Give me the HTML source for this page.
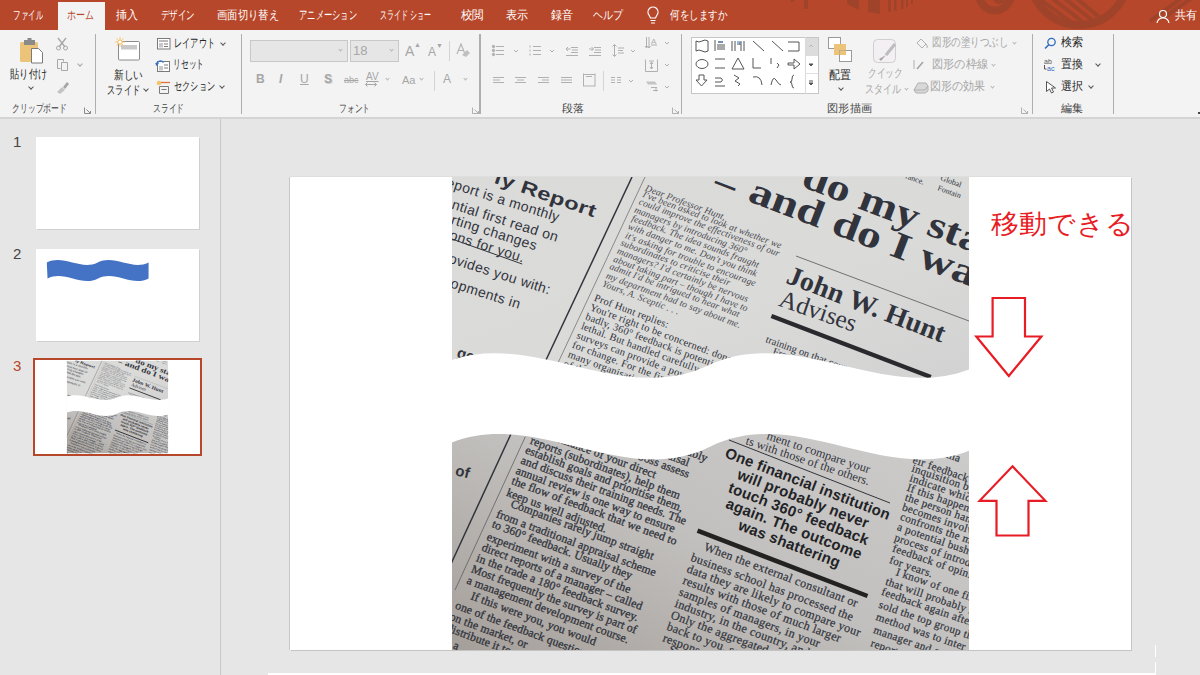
<!DOCTYPE html>
<html><head><meta charset="utf-8">
<style>
*{margin:0;padding:0;box-sizing:border-box}
html,body{width:1200px;height:675px;overflow:hidden;background:#E6E6E6;font-family:"Liberation Sans",sans-serif}
.abs{position:absolute}
#tabbar{position:absolute;left:0;top:0;width:1200px;height:30px;background:#B7472A;overflow:hidden}
.tab{position:absolute;top:9px;font-size:11px;color:#fff;white-space:nowrap;line-height:14px}
#hometab{position:absolute;left:58px;top:2px;width:47px;height:29px;background:#F3F3F3}
#ribbon{position:absolute;left:0;top:30px;width:1200px;height:89px;background:#F3F3F3;border-bottom:2px solid #D4D4D4}
.sep{position:absolute;width:1px;background:#AEAEAE}
.rt{position:absolute;font-size:11px;color:#262626;white-space:nowrap;line-height:13px}
.dis{color:#A6A6A6}
.chev{position:absolute;width:4px;height:4px;border-right:1px solid #555;border-bottom:1px solid #555;transform:rotate(45deg)}
.jt{position:absolute;white-space:nowrap;line-height:1.2;transform-origin:0 50%}
.glabel{position:absolute;top:73px;font-size:11px;color:#444;white-space:nowrap;line-height:13px}
#leftpane{position:absolute;left:0;top:119px;width:221px;height:556px;background:#E6E6E6;border-right:1px solid #C8C8C8}
.thumb{position:absolute;background:#fff;box-shadow:1px 1px 0 #D0D0D0}
.num{position:absolute;left:13px;font-size:15px;line-height:15px;color:#444}
#slide{position:absolute;left:290px;top:177px;width:841px;height:473px;background:#fff;box-shadow:1px 1px 0 #C4C4C4,-1px 0 0 #C8C8C8,0 -1px 0 #DEDEDE}
</style></head><body>
<div id="tabbar">
  <svg class="abs" style="left:0;top:0" width="1200" height="30">
   <g fill="#9F432B">
    <rect x="804" y="0" width="4" height="9"/><rect x="791" y="0" width="3" height="2"/>
    <path d="M847,0h12v10l-12,-6z"/><path d="M868,0h12v14l-12,-2z"/>
    <rect x="888" y="0" width="3" height="12"/><rect x="894" y="0" width="2.5" height="11"/><rect x="901" y="0" width="2.5" height="9"/><rect x="906" y="0" width="2" height="7"/><rect x="911" y="0" width="2" height="4"/>
   </g>
   <g fill="none" stroke="#9F432B">
    <circle cx="995" cy="-5" r="15.5" stroke-width="8"/>
    <circle cx="1079" cy="-24" r="49" stroke-width="8"/>
   </g>
   <circle cx="999" cy="-2" r="6" fill="#9F432B"/>
   <g stroke="#9F432B" stroke-width="4">
    <path d="M1038,-2l36,26M1049,-4l34,26M1059,-6l33,26M1069,-8l30,25"/>
    <path d="M1150,21l36,-26M1162,19l34,-24"/>
   </g>
   <g fill="none" stroke="#fff" stroke-width="1.2">
    <path d="M649,15a5,5 0 1 1 8,0l-1.5,3h-5z"/><path d="M650.5,20.5h5M651,23h4"/>
    <circle cx="1163" cy="14" r="3.5"/><path d="M1157,23q1,-5 6,-5q5,0 6,5"/>
   </g>
  </svg>
  <div id="hometab"></div>
  </div>
<div id="ribbon"></div>
<!-- separators -->
<div class="sep" style="left:95px;top:34px;height:80px"></div>
<div class="sep" style="left:241px;top:34px;height:80px"></div>
<div class="sep" style="left:479px;top:34px;height:80px;width:2px"></div>
<div class="sep" style="left:681px;top:34px;height:80px"></div>
<div class="sep" style="left:1032px;top:34px;height:80px"></div>
<div class="sep" style="left:1113px;top:34px;height:80px"></div>
<div class="sep" style="left:449px;top:41px;height:20px;background:#D4D4D4"></div>
<div class="sep" style="left:434px;top:71px;height:20px;background:#D4D4D4"></div>
<div class="sep" style="left:603px;top:71px;height:20px;background:#D4D4D4"></div>
<!-- launchers -->
<svg class="abs" style="left:84px;top:107px" width="8" height="7"><path d="M0.5,0.5v6h6M2.5,2.5l4,4M4,6.5h2.5v-2.5" stroke="#8A8A8A" fill="none" stroke-width="1"/></svg>
<svg class="abs" style="left:472px;top:107px" width="8" height="7"><path d="M0.5,0.5v6h6M2.5,2.5l4,4M4,6.5h2.5v-2.5" stroke="#B0B0B0" fill="none" stroke-width="1"/></svg>
<svg class="abs" style="left:672px;top:107px" width="8" height="7"><path d="M0.5,0.5v6h6M2.5,2.5l4,4M4,6.5h2.5v-2.5" stroke="#B0B0B0" fill="none" stroke-width="1"/></svg>
<svg class="abs" style="left:1021px;top:107px" width="8" height="7"><path d="M0.5,0.5v6h6M2.5,2.5l4,4M4,6.5h2.5v-2.5" stroke="#B0B0B0" fill="none" stroke-width="1"/></svg>
<!-- clipboard -->
<svg class="abs" style="left:18px;top:37px" width="28" height="28">
 <rect x="2" y="5" width="18" height="20" rx="1.5" fill="#EBC47A"/>
 <rect x="6" y="3" width="11" height="5" fill="#8A8A8A"/><rect x="9.5" y="1" width="4" height="3" fill="#8A8A8A"/>
 <path d="M13.5,11.5h7l4,4v10.5h-11z" fill="#fff" stroke="#7A7A7A"/>
</svg>
<svg class="abs" style="left:55px;top:37px" width="14" height="14"><path d="M3,1l7,9M11,1l-7,9" stroke="#A6A6A6" stroke-width="1.3" fill="none"/><circle cx="3.5" cy="11" r="2" stroke="#A6A6A6" fill="none"/><circle cx="10.5" cy="11" r="2" stroke="#A6A6A6" fill="none"/></svg>
<svg class="abs" style="left:56px;top:58px" width="14" height="14"><path d="M1.5,1.5h6v2M1.5,1.5v9h3M5.5,4.5h6v8h-6z" stroke="#A6A6A6" fill="none"/></svg>
<svg class="abs" style="left:55px;top:80px" width="15" height="14"><path d="M2,12l5,-5l3,3l-5,4z" fill="#C4C4C4"/><path d="M8,7l4,-5l2,2l-4,5z" fill="#A6A6A6"/></svg>
<div class="chev" style="left:78px;top:62px;border-color:#A6A6A6"></div>
<div class="chev" style="left:29px;top:85px"></div>
<!-- slides -->
<svg class="abs" style="left:114px;top:37px" width="28" height="25">
 <rect x="4.5" y="4.5" width="21" height="18.5" rx="1" fill="#fff" stroke="#8C8C8C"/>
 <rect x="7" y="8" width="16" height="4.5" fill="#C8C8C8"/>
 <circle cx="6" cy="5" r="2.6" fill="#F3C46E"/><path d="M6,0v10M1,5h10M2.5,1.5l7,7M9.5,1.5l-7,7" stroke="#F3C46E" stroke-width="0.9"/><circle cx="6" cy="5" r="1.6" fill="#fff"/>
</svg>
<div class="chev" style="left:144px;top:87px"></div>
<svg class="abs" style="left:156px;top:38px" width="15" height="12"><rect x="1.5" y="0.5" width="12.5" height="10.5" fill="#fff" stroke="#7A7A7A"/><path d="M3,3h9" stroke="#7A7A7A"/><rect x="3" y="5" width="4" height="4.5" fill="#C8C8C8"/><path d="M8,6h4M8,8.5h4" stroke="#7A7A7A"/></svg>
<svg class="abs" style="left:155px;top:59px" width="16" height="13"><rect x="2.5" y="2.5" width="12" height="10" fill="#fff" stroke="#7A7A7A"/><rect x="4" y="7" width="4" height="4.5" fill="#C8C8C8"/><path d="M9,6h4M9,9h4" stroke="#7A7A7A"/><path d="M1.5,6.5a4,4 0 0 1 7,-3" stroke="#3A74C6" stroke-width="1.4" fill="none"/><path d="M0,4l2,3l2,-3z" fill="#3A74C6"/></svg>
<svg class="abs" style="left:156px;top:80px" width="15" height="14"><circle cx="3" cy="3" r="2.3" fill="#F3C46E"/><path d="M5,2.5h9" stroke="#E2703A" stroke-width="1.3"/><path d="M3.5,6.5v7M3.5,6.5h9v7h-9" stroke="#7A7A7A" fill="none"/><path d="M5.5,9.5h5" stroke="#7A7A7A"/></svg>
<div class="chev" style="left:221px;top:41px"></div>
<div class="chev" style="left:220px;top:84px"></div>
<!-- font -->
<div class="abs" style="left:250px;top:40px;width:98px;height:22px;background:#E6E6E6;border:1px solid #C8C8C8"></div>
<div class="chev" style="left:339px;top:48px;border-color:#B8B8B8;width:3px;height:3px"></div>
<div class="abs" style="left:350px;top:40px;width:49px;height:22px;background:#E6E6E6;border:1px solid #C8C8C8"></div>
<div class="chev" style="left:390px;top:48px;border-color:#B8B8B8;width:3px;height:3px"></div>
<div class="abs" style="left:353px;top:44px;font-size:13px;color:#A6A6A6;line-height:14px">18</div>
<div class="abs" style="left:405px;top:44px;font-size:14px;color:#A6A6A6;line-height:14px">A</div>
<div class="abs" style="left:414px;top:41px;font-size:7px;color:#A6A6A6;line-height:7px">▲</div>
<div class="abs" style="left:428px;top:46px;font-size:12px;color:#A6A6A6;line-height:12px">A</div>
<div class="abs" style="left:436px;top:42px;font-size:7px;color:#A6A6A6;line-height:7px">▼</div>
<svg class="abs" style="left:456px;top:43px" width="14" height="15"><path d="M1,11l4,-10l4,10M2.5,7.5h5" stroke="#B4B4B4" fill="none" stroke-width="1.2"/><path d="M6,12l5,-5l3,3l-4,4z" fill="#C0C0C0"/></svg>
<div class="abs" style="left:256px;top:73px;font-size:12px;font-weight:bold;color:#A6A6A6;line-height:13px">B</div>
<div class="abs" style="left:279px;top:73px;font-size:12px;font-style:italic;font-weight:bold;color:#A6A6A6;line-height:13px">I</div>
<div class="abs" style="left:300px;top:73px;font-size:12px;color:#A6A6A6;line-height:13px;text-decoration:underline">U</div>
<div class="abs" style="left:324px;top:73px;font-size:12px;font-weight:bold;color:#A6A6A6;line-height:13px;text-shadow:1px 1px 0 #D0D0D0">S</div>
<div class="abs" style="left:344px;top:75px;font-size:9px;color:#A6A6A6;line-height:10px;text-decoration:line-through">abc</div>
<div class="abs" style="left:366px;top:72px;font-size:10px;color:#A6A6A6;line-height:10px;text-decoration:underline">AV</div>
<svg class="abs" style="left:365px;top:82px" width="12" height="5"><path d="M0.5,2.5h11M0.5,2.5l2,-2M0.5,2.5l2,2M11.5,2.5l-2,-2M11.5,2.5l-2,2" stroke="#A6A6A6" fill="none"/></svg>
<div class="chev" style="left:386px;top:77px;border-color:#B8B8B8;width:3px;height:3px"></div>
<div class="abs" style="left:402px;top:74px;font-size:11px;color:#A6A6A6;line-height:12px">Aa</div>
<div class="chev" style="left:420px;top:77px;border-color:#B8B8B8;width:3px;height:3px"></div>
<div class="abs" style="left:443px;top:73px;font-size:12px;color:#A6A6A6;line-height:13px">A</div>
<div class="chev" style="left:464px;top:77px;border-color:#B8B8B8;width:3px;height:3px"></div>
<!-- paragraph -->
<svg class="abs" style="left:488px;top:36px" width="185" height="58" fill="none" stroke="#B0B0B0">
 <g transform="translate(4,9)"><circle cx="1.5" cy="1.5" r="1.2" fill="#B0B0B0"/><circle cx="1.5" cy="5.5" r="1.2" fill="#B0B0B0"/><circle cx="1.5" cy="9.5" r="1.2" fill="#B0B0B0"/><path d="M4,1.5h8M4,5.5h8M4,9.5h8"/></g>
 <path d="M26,14l2,2l2,-2"/>
 <g transform="translate(41,9)"><path d="M1,0.5v2M1,4.5v2M1,8.5v2M4,1.5h8M4,5.5h8M4,9.5h8"/></g>
 <path d="M62,14l2,2l2,-2"/>
 <g transform="translate(78,9)"><path d="M0.5,4h4M2,2l-2,2l2,2M5,2.5h7M6,5h6M5,7.5h7M0,10.5h12"/></g>
 <g transform="translate(101,9)"><path d="M0,4h4M2.5,2l2,2l-2,2M5,2.5h7M6,5h6M5,7.5h7M0,10.5h12"/></g>
 <g transform="translate(124,8)"><path d="M2.5,0.5v12M0.5,2.5l2,-2l2,2M0.5,10.5l2,2l2,-2M6,4h6M6,6.5h5M6,9h6"/></g>
 <path d="M143,14l2,2l2,-2"/>
 <g transform="translate(157,1)"><path d="M1.5,0v11M4,0v11M0,9l1.5,2l1.5,-2M2.5,9l1.5,2l1.5,-2M6,8h6"/><text x="6" y="7" font-size="8" fill="#B0B0B0" stroke="none" font-family="Liberation Sans">A</text></g>
 <path d="M177,6l2,2l2,-2"/>
 <g transform="translate(157,23)"><path d="M0.5,0.5v12h12v-12M4,2h5M6.5,3v7M5,8l1.5,2l1.5,-2M5,5l1.5,-2l1.5,2"/></g>
 <path d="M177,28l2,2l2,-2"/>
 <g transform="translate(157,45)"><path d="M1,0.5h9l2,3h-9z" fill="#C4C4C4" stroke="none"/><path d="M6,6.5h6M11,6.5v4M8,9.5h5"/></g>
 <path d="M177,50l2,2l2,-2"/>
 <g transform="translate(5,40)"><path d="M0,1.5h11M0,4h7M0,6.5h11"/></g>
 <g transform="translate(27,40)"><path d="M0,1.5h11M2,4h7M0,6.5h11"/></g>
 <g transform="translate(50,40)"><path d="M0,1.5h11M4,4h7M0,6.5h11"/></g>
 <g transform="translate(73,40)"><path d="M0,1.5h11M0,4h11M0,6.5h11"/></g>
 <g transform="translate(95,37)"><path d="M0.5,0.5v13M12,0.5v13M1,1.5h11M1,13h11M3,3.5h6"/></g>
 <g transform="translate(123,40)"><path d="M0,1.5h4M6,1.5h4M0,4h4M6,4h4M0,6.5h4M6,6.5h4"/></g>
 <path d="M141,44l2,2l2,-2"/>
</svg>
<!-- drawing -->
<div class="abs" style="left:691px;top:37px;width:128px;height:57px;background:#fff;border:1px solid #C6C6C6"></div>
<div class="abs" style="left:805px;top:38px;width:13px;height:18px;background:#DCDCDC"></div>
<div class="abs" style="left:805px;top:37px;width:1px;height:57px;background:#DADADA"></div>
<div class="abs" style="left:805px;top:73px;width:13px;height:1px;background:#E0E0E0"></div>
<svg class="abs" style="left:691px;top:37px" width="128" height="57" fill="none" stroke="#555" stroke-width="1">
 <path d="M118,10l2,-2l2,2" stroke="#B8B8B8"/>
 <path d="M118,27h4l-2,2z" fill="#555"/>
 <path d="M118,44h4M118,46h4l-2,2z" fill="#555"/>
 <path d="M5,4q3,2 6,0t6,0M5,14q3,-2 6,0t6,0M5,4v10M17,4v10"/>
 <path d="M24,3v11M26,8h8M26,10h8M26,12h8M27,5h5" /><path d="M27,5h5" stroke="#3A74C6"/>
 <path d="M41,4v10M44,4v10M50,4v10M53,4v10M46,7h3" /><path d="M46,5h3v3" stroke="#3A74C6"/>
 <path d="M62,4l11,10"/><path d="M81,4l11,10"/>
 <path d="M97,5h11v9h-11"/>
 <ellipse cx="11" cy="27" rx="6" ry="4.5"/>
 <path d="M24,22h10M24,31h10"/>
 <path d="M41,32l6,-11l6,11z"/>
 <path d="M62,21v10h8"/>
 <path d="M80,21v6M86,26l2,2l-2,3"/>
 <path d="M97,26h6v-4l6,5l-6,5v-4h-6z"/>
 <path d="M8,38h5v5h3l-5.5,6l-5.5,-6h3z"/>
 <path d="M24,41h6q3,2 0,4h-6M24,49h10"/>
 <path d="M43,38l5,3l-4,3l5,3l-2,2"/>
 <path d="M62,40q8,-2 9,8"/>
 <path d="M80,48q2,-10 5,-5t5,5"/>
 <path d="M103,38q-2,0 -2,4t-2,3q2,0 2,3t2,3"/>
</svg>
<svg class="abs" style="left:826px;top:37px" width="28" height="26">
 <rect x="2.5" y="0.5" width="12" height="11" fill="#fff" stroke="#9A9A9A"/>
 <rect x="8" y="7" width="12" height="11" fill="#EBC47A"/>
 <rect x="13.5" y="13.5" width="12" height="11" fill="#fff" stroke="#9A9A9A"/>
 <rect x="13.5" y="13.5" width="6.5" height="4.5" fill="#EBC47A"/>
</svg>
<div class="chev" style="left:839px;top:86px"></div>
<svg class="abs" style="left:871px;top:38px" width="28" height="28">
 <rect x="2.5" y="1.5" width="22" height="23" rx="4" fill="#F3EFF3" stroke="#CFCFCF"/>
 <path d="M24,6l-9,11" stroke="#BDBDBD" stroke-width="3"/><path d="M15,17l-5,6l-2,-2z" fill="#A8A8A8"/>
</svg>
<div class="chev" style="left:905px;top:87px;border-color:#B8B8B8;width:3px;height:3px"></div>
<svg class="abs" style="left:915px;top:37px" width="14" height="12"><path d="M2,6l4,-4l5,5l-4,4z" stroke="#B0B0B0" fill="none"/><path d="M11,7q2,2 1,4" stroke="#B0B0B0" fill="none"/></svg>
<div class="chev" style="left:1013px;top:41px;border-color:#B8B8B8;width:3px;height:3px"></div>
<svg class="abs" style="left:913px;top:59px" width="12" height="12"><path d="M1,1v9" stroke="#B0B0B0"/><path d="M4,10l6,-7" stroke="#A0A0A0" stroke-width="1.5"/></svg>
<div class="chev" style="left:992px;top:63px;border-color:#B8B8B8;width:3px;height:3px"></div>
<svg class="abs" style="left:913px;top:81px" width="16" height="13"><path d="M1,9l4,-7h8l2,3v5l-3,2h-9z" fill="#D8D8D8" stroke="#B0B0B0"/><path d="M1,9h11l3,-4" stroke="#B0B0B0" fill="none"/></svg>
<div class="chev" style="left:991px;top:85px;border-color:#B8B8B8;width:3px;height:3px"></div>
<!-- editing -->
<svg class="abs" style="left:1044px;top:37px" width="13" height="13"><circle cx="7.5" cy="5" r="3.7" stroke="#2F6BC2" stroke-width="1.3" fill="none"/><path d="M5,7.5l-4,4" stroke="#2F6BC2" stroke-width="1.6"/></svg>
<svg class="abs" style="left:1044px;top:58px" width="15" height="14"><text x="0" y="6" font-size="7" font-family="Liberation Sans" fill="#555">ab</text><text x="3" y="13" font-size="7" font-family="Liberation Sans" fill="#2F6BC2">ac</text><path d="M0.5,7v4h2" stroke="#555" fill="none"/></svg>
<div class="chev" style="left:1096px;top:62px"></div>
<svg class="abs" style="left:1045px;top:80px" width="12" height="14"><path d="M1.5,1.5v10l3,-2.5l2,4l2,-1l-2,-4h4z" stroke="#555" fill="#fff"/></svg>
<div class="chev" style="left:1089px;top:84px"></div>

<div class="abs" style="left:1198px;top:112px;width:2px;height:2px;background:#444"></div>

<div class="jt" style="left:13px;top:9.4px;font-size:11.5px;color:#FFFFFF;transform:scaleX(0.625)">ファイル</div>
<div class="jt" style="left:67px;top:9.4px;font-size:11.5px;color:#B7472A;transform:scaleX(0.750)">ホーム</div>
<div class="jt" style="left:116px;top:9.4px;font-size:11.5px;color:#FFFFFF;transform:scaleX(0.917)">挿入</div>
<div class="jt" style="left:161px;top:9.4px;font-size:11.5px;color:#FFFFFF;transform:scaleX(0.708)">デザイン</div>
<div class="jt" style="left:217px;top:9.4px;font-size:11.5px;color:#FFFFFF;transform:scaleX(0.861)">画面切り替え</div>
<div class="jt" style="left:299px;top:9.4px;font-size:11.5px;color:#FFFFFF;transform:scaleX(0.690)">アニメーション</div>
<div class="jt" style="left:380px;top:9.4px;font-size:11.5px;color:#FFFFFF;transform:scaleX(0.585)">スライド ショー</div>
<div class="jt" style="left:461px;top:9.4px;font-size:11.5px;color:#FFFFFF;transform:scaleX(0.958)">校閲</div>
<div class="jt" style="left:506px;top:9.4px;font-size:11.5px;color:#FFFFFF;transform:scaleX(0.917)">表示</div>
<div class="jt" style="left:551px;top:9.4px;font-size:11.5px;color:#FFFFFF;transform:scaleX(0.917)">録音</div>
<div class="jt" style="left:593px;top:9.4px;font-size:11.5px;color:#FFFFFF;transform:scaleX(0.833)">ヘルプ</div>
<div class="jt" style="left:670px;top:9.4px;font-size:11.5px;color:#FFFFFF;transform:scaleX(0.792)">何をしますか</div>
<div class="jt" style="left:1175px;top:9.4px;font-size:11.5px;color:#FFFFFF;transform:scaleX(0.917)">共有</div>
<div class="jt" style="left:10px;top:67.1px;font-size:12px;color:#262626;transform:scaleX(0.771)">貼り付け</div>
<div class="jt" style="left:12px;top:102.2px;font-size:11px;color:#444444;transform:scaleX(0.714)">クリップボード</div>
<div class="jt" style="left:114px;top:67.6px;font-size:12px;color:#262626;transform:scaleX(0.806)">新しい</div>
<div class="jt" style="left:107px;top:82.6px;font-size:12px;color:#262626;transform:scaleX(0.688)">スライド</div>
<div class="jt" style="left:174px;top:37.4px;font-size:11.5px;color:#262626;transform:scaleX(0.683)">レイアウト</div>
<div class="jt" style="left:173px;top:58.4px;font-size:11.5px;color:#262626;transform:scaleX(0.646)">リセット</div>
<div class="jt" style="left:174px;top:80.4px;font-size:11.5px;color:#262626;transform:scaleX(0.683)">セクション</div>
<div class="jt" style="left:153px;top:102.2px;font-size:11px;color:#444444;transform:scaleX(0.705)">スライド</div>
<div class="jt" style="left:339px;top:102.2px;font-size:11px;color:#444444;transform:scaleX(0.705)">フォント</div>
<div class="jt" style="left:562px;top:102.2px;font-size:11px;color:#444444;transform:scaleX(1.000)">段落</div>
<div class="jt" style="left:829px;top:67.6px;font-size:12px;color:#262626;transform:scaleX(0.917)">配置</div>
<div class="jt" style="left:868px;top:66.9px;font-size:11.5px;color:#A6A6A6;transform:scaleX(0.729)">クイック</div>
<div class="jt" style="left:865px;top:82.9px;font-size:11.5px;color:#A6A6A6;transform:scaleX(0.750)">スタイル</div>
<div class="jt" style="left:932px;top:35.9px;font-size:11.5px;color:#A6A6A6;transform:scaleX(0.792)">図形の塗りつぶし</div>
<div class="jt" style="left:932px;top:57.9px;font-size:11.5px;color:#A6A6A6;transform:scaleX(0.933)">図形の枠線</div>
<div class="jt" style="left:930px;top:79.9px;font-size:11.5px;color:#A6A6A6;transform:scaleX(0.917)">図形の効果</div>
<div class="jt" style="left:827px;top:102.2px;font-size:11px;color:#444444;transform:scaleX(1.023)">図形描画</div>
<div class="jt" style="left:1061px;top:35.9px;font-size:11.5px;color:#262626;transform:scaleX(0.917)">検索</div>
<div class="jt" style="left:1061px;top:57.9px;font-size:11.5px;color:#262626;transform:scaleX(0.917)">置換</div>
<div class="jt" style="left:1061px;top:79.9px;font-size:11.5px;color:#262626;transform:scaleX(0.917)">選択</div>
<div class="jt" style="left:1061px;top:102.2px;font-size:11px;color:#444444;transform:scaleX(1.000)">編集</div>
<div id="leftpane">
  <div class="num" style="top:15.3px">1</div>
  <div class="thumb" style="left:36px;top:18px;width:163px;height:92px"></div>
  <div class="num" style="top:127.3px">2</div>
  <div class="thumb" style="left:36px;top:130px;width:163px;height:92px"></div>
  <div class="num" style="top:239.3px;color:#B7472A">3</div>
  <div class="abs" style="left:33px;top:239px;width:169px;height:98px;border:2px solid #B7472A;background:#fff"></div>
</div>
<div id="slide"></div>
<svg class="abs" style="left:0;top:0" width="1200" height="675" viewBox="0 0 1200 675">
<defs>
<clipPath id="imgclip"><rect x="452" y="177" width="517" height="473"/></clipPath>
<linearGradient id="gtop" x1="0" y1="0" x2="1" y2="1">
<stop offset="0" stop-color="#DBDBDA"/><stop offset="0.6" stop-color="#DADAD9"/><stop offset="1" stop-color="#D2D2D2"/></linearGradient>
<linearGradient id="gbot" x1="0" y1="1" x2="1" y2="0">
<stop offset="0" stop-color="#A59F9A"/><stop offset="0.45" stop-color="#C2C0BE"/><stop offset="1" stop-color="#CFCFCF"/></linearGradient>
</defs>
<g id="newsg" clip-path="url(#imgclip)">
<rect x="452" y="177" width="517" height="205" fill="url(#gtop)"/>
<rect x="452" y="382" width="517" height="268" fill="url(#gbot)"/>
<text transform="translate(594.0,217.5) rotate(19) scale(1.32,1)" font-family='"Liberation Sans",sans-serif' font-size="18" font-weight="bold" font-style="normal" fill="#31343c" letter-spacing="0.3" text-anchor="end" >ly Report</text><text transform="translate(557.8,222.0) rotate(17.5)" font-family='"Liberation Sans",sans-serif' font-size="14" font-weight="normal" font-style="normal" fill="#31343c" letter-spacing="0.4" text-anchor="end" >eport is a monthly</text><text transform="translate(556.9,242.0) rotate(17.5)" font-family='"Liberation Sans",sans-serif' font-size="14" font-weight="normal" font-style="normal" fill="#31343c" letter-spacing="0.4" text-anchor="end" >ential first read on</text><text transform="translate(535.5,250.5) rotate(17.5)" font-family='"Liberation Sans",sans-serif' font-size="14" font-weight="normal" font-style="normal" fill="#31343c" letter-spacing="0.4" text-anchor="end" >rting changes</text><text transform="translate(523.0,262.5) rotate(17.5)" font-family='"Liberation Sans",sans-serif' font-size="14" font-weight="normal" font-style="normal" fill="#31343c" letter-spacing="0.4" text-anchor="end" >ons for you.</text><text transform="translate(549.0,294.5) rotate(17.5)" font-family='"Liberation Sans",sans-serif' font-size="14" font-weight="normal" font-style="normal" fill="#31343c" letter-spacing="0.4" text-anchor="end" >ovides you with:</text><text transform="translate(519.0,309.0) rotate(17.5)" font-family='"Liberation Sans",sans-serif' font-size="14" font-weight="normal" font-style="normal" fill="#31343c" letter-spacing="0.4" text-anchor="end" >opments in</text><line x1="452.0" y1="239.0" x2="522.2" y2="264.0" stroke="#31343c" stroke-width="1"/><text transform="translate(456.0,357.0) rotate(17)" font-family='"Liberation Sans",sans-serif' font-size="15" font-weight="bold" font-style="normal" fill="#31343c" letter-spacing="0" text-anchor="start" >ge</text><line x1="632.0" y1="177.0" x2="546.0" y2="360.0" stroke="#31343c" stroke-width="1.5"/><line x1="645.0" y1="177.0" x2="557.0" y2="365.0" stroke="#666" stroke-width="0.7"/><text transform="translate(644.6,190.5) rotate(20.5)" font-family='"Liberation Serif",serif' font-size="9.5" font-weight="normal" font-style="italic" fill="#4a4a50" letter-spacing="0.15" text-anchor="start" >Dear Professor Hunt,</text><text transform="translate(642.0,196.8) rotate(20.5)" font-family='"Liberation Serif",serif' font-size="9.5" font-weight="normal" font-style="italic" fill="#4a4a50" letter-spacing="0.15" text-anchor="start" >I've been asked to look at whether we</text><text transform="translate(638.3,204.1) rotate(20.5)" font-family='"Liberation Serif",serif' font-size="9.5" font-weight="normal" font-style="italic" fill="#4a4a50" letter-spacing="0.15" text-anchor="start" >could improve the effectiveness of our</text><text transform="translate(633.7,212.3) rotate(20.5)" font-family='"Liberation Serif",serif' font-size="9.5" font-weight="normal" font-style="italic" fill="#4a4a50" letter-spacing="0.15" text-anchor="start" >managers by introducing 360°</text><text transform="translate(631.0,220.5) rotate(20.5)" font-family='"Liberation Serif",serif' font-size="9.5" font-weight="normal" font-style="italic" fill="#4a4a50" letter-spacing="0.15" text-anchor="start" >feedback. The idea sounds fraught</text><text transform="translate(627.3,228.7) rotate(20.5)" font-family='"Liberation Serif",serif' font-size="9.5" font-weight="normal" font-style="italic" fill="#4a4a50" letter-spacing="0.15" text-anchor="start" >with danger to me. Don't you think</text><text transform="translate(624.6,237.8) rotate(20.5)" font-family='"Liberation Serif",serif' font-size="9.5" font-weight="normal" font-style="italic" fill="#4a4a50" letter-spacing="0.15" text-anchor="start" >it's asking for trouble to encourage</text><text transform="translate(620.0,245.1) rotate(20.5)" font-family='"Liberation Serif",serif' font-size="9.5" font-weight="normal" font-style="italic" fill="#4a4a50" letter-spacing="0.15" text-anchor="start" >subordinates to criticise their</text><text transform="translate(616.4,253.3) rotate(20.5)" font-family='"Liberation Serif",serif' font-size="9.5" font-weight="normal" font-style="italic" fill="#4a4a50" letter-spacing="0.15" text-anchor="start" >managers? I'd certainly be nervous</text><text transform="translate(612.8,261.5) rotate(20.5)" font-family='"Liberation Serif",serif' font-size="9.5" font-weight="normal" font-style="italic" fill="#4a4a50" letter-spacing="0.15" text-anchor="start" >about taking part – though I have to</text><text transform="translate(609.0,268.8) rotate(20.5)" font-family='"Liberation Serif",serif' font-size="9.5" font-weight="normal" font-style="italic" fill="#4a4a50" letter-spacing="0.15" text-anchor="start" >admit I'd be intrigued to hear what</text><text transform="translate(605.5,277.9) rotate(20.5)" font-family='"Liberation Serif",serif' font-size="9.5" font-weight="normal" font-style="italic" fill="#4a4a50" letter-spacing="0.15" text-anchor="start" >my department had to say about me.</text><text transform="translate(601.8,286.1) rotate(20.5)" font-family='"Liberation Serif",serif' font-size="9.5" font-weight="normal" font-style="italic" fill="#4a4a50" letter-spacing="0.15" text-anchor="start" >Yours, A. Sceptic . . .</text><text transform="translate(593.6,300.5) rotate(20.5)" font-family='"Liberation Serif",serif' font-size="10.5" font-weight="normal" font-style="normal" fill="#31343c" letter-spacing="0.2" text-anchor="start" >Prof Hunt replies:</text><text transform="translate(589.2,309.9) rotate(20.5)" font-family='"Liberation Serif",serif' font-size="10.5" font-weight="normal" font-style="normal" fill="#31343c" letter-spacing="0.2" text-anchor="start" >You're right to be concerned: done</text><text transform="translate(584.8,319.3) rotate(20.5)" font-family='"Liberation Serif",serif' font-size="10.5" font-weight="normal" font-style="normal" fill="#31343c" letter-spacing="0.2" text-anchor="start" >badly, 360° feedback is potentially</text><text transform="translate(580.4,328.7) rotate(20.5)" font-family='"Liberation Serif",serif' font-size="10.5" font-weight="normal" font-style="normal" fill="#31343c" letter-spacing="0.2" text-anchor="start" >lethal. But handled carefully,</text><text transform="translate(576.0,338.1) rotate(20.5)" font-family='"Liberation Serif",serif' font-size="10.5" font-weight="normal" font-style="normal" fill="#31343c" letter-spacing="0.2" text-anchor="start" >surveys can provide a powerful impetus</text><text transform="translate(571.6,347.5) rotate(20.5)" font-family='"Liberation Serif",serif' font-size="10.5" font-weight="normal" font-style="normal" fill="#31343c" letter-spacing="0.2" text-anchor="start" >for change. For the first time</text><text transform="translate(567.2,356.9) rotate(20.5)" font-family='"Liberation Serif",serif' font-size="10.5" font-weight="normal" font-style="normal" fill="#31343c" letter-spacing="0.2" text-anchor="start" >many organisations can</text><text transform="translate(562.8,366.3) rotate(20.5)" font-family='"Liberation Serif",serif' font-size="10.5" font-weight="normal" font-style="normal" fill="#31343c" letter-spacing="0.2" text-anchor="start" >of the</text><text transform="translate(712.0,190.0) rotate(21) scale(1.15,1)" font-family='"Liberation Serif",serif' font-size="37" font-weight="bold" font-style="normal" fill="#31343c" letter-spacing="0" text-anchor="start" >–</text><text transform="translate(746.5,200.5) rotate(21) scale(1.26,1)" font-family='"Liberation Serif",serif' font-size="38" font-weight="bold" font-style="normal" fill="#31343c" letter-spacing="0" text-anchor="start" >and do I wa</text><text transform="translate(800.0,186.0) rotate(21) scale(1.22,1)" font-family='"Liberation Serif",serif' font-size="38" font-weight="bold" font-style="normal" fill="#31343c" letter-spacing="0" text-anchor="start" >do my sta</text><line x1="796.0" y1="256.0" x2="969.0" y2="321.0" stroke="#555" stroke-width="0.8"/><text transform="translate(785.0,282.5) rotate(21) scale(1.04,1)" font-family='"Liberation Serif",serif' font-size="27" font-weight="bold" font-style="normal" fill="#31343c" letter-spacing="0" text-anchor="start" >John W. Hunt</text><text transform="translate(777.4,305.6) rotate(19)" font-family='"Liberation Serif",serif' font-size="25" font-weight="normal" font-style="normal" fill="#31343c" letter-spacing="0" text-anchor="start" >Advises</text><line x1="771.4" y1="316.0" x2="930.8" y2="377.0" stroke="#2a2a2e" stroke-width="4.5"/><text transform="translate(765.0,342.0) rotate(20)" font-family='"Liberation Serif",serif' font-size="10.5" font-weight="normal" font-style="normal" fill="#31343c" letter-spacing="0" text-anchor="start" >training on that course</text><text transform="translate(772.0,354.0) rotate(20)" font-family='"Liberation Serif",serif' font-size="10.5" font-weight="normal" font-style="normal" fill="#31343c" letter-spacing="0" text-anchor="start" >From</text><text transform="translate(905.0,178.0) rotate(20)" font-family='"Liberation Serif",serif' font-size="8" font-weight="normal" font-style="normal" fill="#31343c" letter-spacing="0" text-anchor="start" >rance.</text><text transform="translate(940.0,180.0) rotate(20)" font-family='"Liberation Serif",serif' font-size="8" font-weight="normal" font-style="normal" fill="#31343c" letter-spacing="0" text-anchor="start" >Global</text><text transform="translate(937.0,190.0) rotate(20)" font-family='"Liberation Serif",serif' font-size="8" font-weight="normal" font-style="normal" fill="#31343c" letter-spacing="0" text-anchor="start" >Fontain</text><text transform="translate(454.6,475.0) rotate(14)" font-family='"Liberation Sans",sans-serif' font-size="15" font-weight="bold" font-style="normal" fill="#31343c" letter-spacing="0" text-anchor="start" >of</text><line x1="510.8" y1="434.3" x2="459.7" y2="545.0" stroke="#31343c" stroke-width="1.5"/><line x1="459.7" y1="545.0" x2="438.0" y2="592.0" stroke="#31343c" stroke-width="1.5"/><line x1="525.3" y1="436.8" x2="455.0" y2="590.0" stroke="#555" stroke-width="0.7"/><text transform="translate(544.0,437.0) rotate(20.5)" font-family='"Liberation Serif",serif' font-size="11.8" font-weight="normal" font-style="normal" fill="#31343c" letter-spacing="0.1" text-anchor="start" stroke="#31343c" stroke-width="0.3">rformance of your direct</text><text transform="translate(529.5,443.6) rotate(20.5)" font-family='"Liberation Serif",serif' font-size="11.8" font-weight="normal" font-style="normal" fill="#31343c" letter-spacing="0.1" text-anchor="start" stroke="#31343c" stroke-width="0.3">reports (subordinates), help them</text><text transform="translate(524.4,453.0) rotate(20.5)" font-family='"Liberation Serif",serif' font-size="11.8" font-weight="normal" font-style="normal" fill="#31343c" letter-spacing="0.1" text-anchor="start" stroke="#31343c" stroke-width="0.3">establish goals and prioritise them,</text><text transform="translate(520.1,463.2) rotate(20.5)" font-family='"Liberation Serif",serif' font-size="11.8" font-weight="normal" font-style="normal" fill="#31343c" letter-spacing="0.1" text-anchor="start" stroke="#31343c" stroke-width="0.3">and discuss their training needs. The</text><text transform="translate(515.0,473.4) rotate(20.5)" font-family='"Liberation Serif",serif' font-size="11.8" font-weight="normal" font-style="normal" fill="#31343c" letter-spacing="0.1" text-anchor="start" stroke="#31343c" stroke-width="0.3">annual review is one way to ensure</text><text transform="translate(510.8,483.7) rotate(20.5)" font-family='"Liberation Serif",serif' font-size="11.8" font-weight="normal" font-style="normal" fill="#31343c" letter-spacing="0.1" text-anchor="start" stroke="#31343c" stroke-width="0.3">the flow of feedback that we need to</text><text transform="translate(505.7,495.6) rotate(20.5)" font-family='"Liberation Serif",serif' font-size="11.8" font-weight="normal" font-style="normal" fill="#31343c" letter-spacing="0.1" text-anchor="start" stroke="#31343c" stroke-width="0.3">keep us well adjusted.</text><text transform="translate(509.9,506.7) rotate(20.5)" font-family='"Liberation Serif",serif' font-size="11.8" font-weight="normal" font-style="normal" fill="#31343c" letter-spacing="0.1" text-anchor="start" stroke="#31343c" stroke-width="0.3">Companies rarely jump straight</text><text transform="translate(495.4,516.9) rotate(20.5)" font-family='"Liberation Serif",serif' font-size="11.8" font-weight="normal" font-style="normal" fill="#31343c" letter-spacing="0.1" text-anchor="start" stroke="#31343c" stroke-width="0.3">from a traditional appraisal scheme</text><text transform="translate(491.2,527.1) rotate(20.5)" font-family='"Liberation Serif",serif' font-size="11.8" font-weight="normal" font-style="normal" fill="#31343c" letter-spacing="0.1" text-anchor="start" stroke="#31343c" stroke-width="0.3">to 360° feedback. Usually they</text><text transform="translate(486.0,539.8) rotate(20.5)" font-family='"Liberation Serif",serif' font-size="11.8" font-weight="normal" font-style="normal" fill="#31343c" letter-spacing="0.1" text-anchor="start" stroke="#31343c" stroke-width="0.3">experiment with a survey of the</text><text transform="translate(481.0,550.3) rotate(20.5)" font-family='"Liberation Serif",serif' font-size="11.8" font-weight="normal" font-style="normal" fill="#31343c" letter-spacing="0.1" text-anchor="start" stroke="#31343c" stroke-width="0.3">direct reports of a manager – called</text><text transform="translate(475.5,561.0) rotate(20.5)" font-family='"Liberation Serif",serif' font-size="11.8" font-weight="normal" font-style="normal" fill="#31343c" letter-spacing="0.1" text-anchor="start" stroke="#31343c" stroke-width="0.3">in the trade a 180° feedback survey.</text><text transform="translate(470.5,572.0) rotate(20.5)" font-family='"Liberation Serif",serif' font-size="11.8" font-weight="normal" font-style="normal" fill="#31343c" letter-spacing="0.1" text-anchor="start" stroke="#31343c" stroke-width="0.3">Most frequently the survey is part of</text><text transform="translate(466.0,583.2) rotate(20.5)" font-family='"Liberation Serif",serif' font-size="11.8" font-weight="normal" font-style="normal" fill="#31343c" letter-spacing="0.1" text-anchor="start" stroke="#31343c" stroke-width="0.3">a management development course.</text><text transform="translate(469.9,598.9) rotate(20.5)" font-family='"Liberation Serif",serif' font-size="11.8" font-weight="normal" font-style="normal" fill="#31343c" letter-spacing="0.1" text-anchor="start" stroke="#31343c" stroke-width="0.3">If this were you, you would</text><text transform="translate(454.6,608.3) rotate(20.5)" font-family='"Liberation Serif",serif' font-size="11.8" font-weight="normal" font-style="normal" fill="#31343c" letter-spacing="0.1" text-anchor="start" stroke="#31343c" stroke-width="0.3">one of the feedback questionnaires</text><text transform="translate(449.0,619.5) rotate(20.5)" font-family='"Liberation Serif",serif' font-size="11.8" font-weight="normal" font-style="normal" fill="#31343c" letter-spacing="0.1" text-anchor="start" stroke="#31343c" stroke-width="0.3">on the market, or</text><text transform="translate(446.0,631.0) rotate(20.5)" font-family='"Liberation Serif",serif' font-size="11.8" font-weight="normal" font-style="normal" fill="#31343c" letter-spacing="0.1" text-anchor="start" stroke="#31343c" stroke-width="0.3">distribute it to</text><text transform="translate(444.0,645.0) rotate(20.5)" font-family='"Liberation Serif",serif' font-size="11.8" font-weight="normal" font-style="normal" fill="#31343c" letter-spacing="0.1" text-anchor="start" stroke="#31343c" stroke-width="0.3">d a</text><text transform="translate(706.0,462.0) rotate(20.5)" font-family='"Liberation Serif",serif' font-size="11.8" font-weight="normal" font-style="normal" fill="#31343c" letter-spacing="0.1" text-anchor="end" stroke="#31343c" stroke-width="0.3">reasonably</text><text transform="translate(688.0,466.5) rotate(20.5)" font-family='"Liberation Serif",serif' font-size="11.8" font-weight="normal" font-style="normal" fill="#31343c" letter-spacing="0.1" text-anchor="end" stroke="#31343c" stroke-width="0.3">appraisal</text><text transform="translate(688.0,478.0) rotate(20.5)" font-family='"Liberation Serif",serif' font-size="11.8" font-weight="normal" font-style="normal" fill="#31343c" letter-spacing="0.1" text-anchor="end" stroke="#31343c" stroke-width="0.3">work of your boss assess</text><text transform="translate(806.0,488.5) rotate(21)" font-family='"Liberation Sans",sans-serif' font-size="15" font-weight="bold" font-style="normal" fill="#222326" letter-spacing="0.2" text-anchor="middle" >One financial institution</text><text transform="translate(801.4,503.5) rotate(21)" font-family='"Liberation Sans",sans-serif' font-size="15" font-weight="bold" font-style="normal" fill="#222326" letter-spacing="0.2" text-anchor="middle" >will probably never</text><text transform="translate(796.8,518.5) rotate(21)" font-family='"Liberation Sans",sans-serif' font-size="15" font-weight="bold" font-style="normal" fill="#222326" letter-spacing="0.2" text-anchor="middle" >touch 360° feedback</text><text transform="translate(792.2,533.5) rotate(21)" font-family='"Liberation Sans",sans-serif' font-size="15" font-weight="bold" font-style="normal" fill="#222326" letter-spacing="0.2" text-anchor="middle" >again. The outcome</text><text transform="translate(787.6,548.5) rotate(21)" font-family='"Liberation Sans",sans-serif' font-size="15" font-weight="bold" font-style="normal" fill="#222326" letter-spacing="0.2" text-anchor="middle" >was shattering</text><line x1="729.0" y1="440.0" x2="890.0" y2="503.0" stroke="#31343c" stroke-width="1"/><line x1="697.5" y1="530.7" x2="867.5" y2="596.0" stroke="#222" stroke-width="4.5"/><text transform="translate(745.0,444.0) rotate(18.5)" font-family='"Liberation Serif",serif' font-size="12.3" font-weight="normal" font-style="normal" fill="#31343c" letter-spacing="0" text-anchor="start" >ts with those of the others.</text><text transform="translate(766.0,439.0) rotate(18.5)" font-family='"Liberation Serif",serif' font-size="12.3" font-weight="normal" font-style="normal" fill="#31343c" letter-spacing="0" text-anchor="start" >ment to compare your</text><text transform="translate(822.0,431.0) rotate(18.5)" font-family='"Liberation Serif",serif' font-size="12.3" font-weight="normal" font-style="normal" fill="#31343c" letter-spacing="0" text-anchor="start" >vey as a</text><text transform="translate(703.3,550.0) rotate(20.5)" font-family='"Liberation Serif",serif' font-size="12.2" font-weight="normal" font-style="normal" fill="#31343c" letter-spacing="0.25" text-anchor="start" stroke="#31343c" stroke-width="0.2">When the external consultant or</text><text transform="translate(690.0,560.5) rotate(20.5)" font-family='"Liberation Serif",serif' font-size="12.2" font-weight="normal" font-style="normal" fill="#31343c" letter-spacing="0.25" text-anchor="start" stroke="#31343c" stroke-width="0.2">business school has processed the</text><text transform="translate(686.0,572.0) rotate(20.5)" font-family='"Liberation Serif",serif' font-size="12.2" font-weight="normal" font-style="normal" fill="#31343c" letter-spacing="0.25" text-anchor="start" stroke="#31343c" stroke-width="0.2">data they are likely to compare your</text><text transform="translate(682.0,583.5) rotate(20.5)" font-family='"Liberation Serif",serif' font-size="12.2" font-weight="normal" font-style="normal" fill="#31343c" letter-spacing="0.25" text-anchor="start" stroke="#31343c" stroke-width="0.2">results with those of much larger</text><text transform="translate(678.0,595.0) rotate(20.5)" font-family='"Liberation Serif",serif' font-size="12.2" font-weight="normal" font-style="normal" fill="#31343c" letter-spacing="0.25" text-anchor="start" stroke="#31343c" stroke-width="0.2">samples of managers, in your</text><text transform="translate(674.0,606.5) rotate(20.5)" font-family='"Liberation Serif",serif' font-size="12.2" font-weight="normal" font-style="normal" fill="#31343c" letter-spacing="0.25" text-anchor="start" stroke="#31343c" stroke-width="0.2">industry, in the country, and</text><text transform="translate(670.0,618.0) rotate(20.5)" font-family='"Liberation Serif",serif' font-size="12.2" font-weight="normal" font-style="normal" fill="#31343c" letter-spacing="0.25" text-anchor="start" stroke="#31343c" stroke-width="0.2">Only the aggregated results</text><text transform="translate(666.0,629.5) rotate(20.5)" font-family='"Liberation Serif",serif' font-size="12.2" font-weight="normal" font-style="normal" fill="#31343c" letter-spacing="0.25" text-anchor="start" stroke="#31343c" stroke-width="0.2">back to you, so you can</text><text transform="translate(662.0,641.0) rotate(20.5)" font-family='"Liberation Serif",serif' font-size="12.2" font-weight="normal" font-style="normal" fill="#31343c" letter-spacing="0.25" text-anchor="start" stroke="#31343c" stroke-width="0.2">responses of</text><text transform="translate(668.0,652.5) rotate(20.5)" font-family='"Liberation Serif",serif' font-size="12.2" font-weight="normal" font-style="normal" fill="#31343c" letter-spacing="0.25" text-anchor="start" stroke="#31343c" stroke-width="0.2">S</text><text transform="translate(935.0,453.8) rotate(19)" font-family='"Liberation Serif",serif' font-size="11.2" font-weight="normal" font-style="normal" fill="#31343c" letter-spacing="0.3" text-anchor="start" stroke="#31343c" stroke-width="0.2">e, ma</text><text transform="translate(912.0,462.8) rotate(19)" font-family='"Liberation Serif",serif' font-size="11.2" font-weight="normal" font-style="normal" fill="#31343c" letter-spacing="0.3" text-anchor="start" stroke="#31343c" stroke-width="0.2">eir feedback</text><text transform="translate(911.0,471.2) rotate(19)" font-family='"Liberation Serif",serif' font-size="11.2" font-weight="normal" font-style="normal" fill="#31343c" letter-spacing="0.3" text-anchor="start" stroke="#31343c" stroke-width="0.2">inquisition by</text><text transform="translate(909.0,480.9) rotate(19)" font-family='"Liberation Serif",serif' font-size="11.2" font-weight="normal" font-style="normal" fill="#31343c" letter-spacing="0.3" text-anchor="start" stroke="#31343c" stroke-width="0.2">indicate which</text><text transform="translate(906.2,490.5) rotate(19)" font-family='"Liberation Serif",serif' font-size="11.2" font-weight="normal" font-style="normal" fill="#31343c" letter-spacing="0.3" text-anchor="start" stroke="#31343c" stroke-width="0.2">If this happens</text><text transform="translate(904.3,500.2) rotate(19)" font-family='"Liberation Serif",serif' font-size="11.2" font-weight="normal" font-style="normal" fill="#31343c" letter-spacing="0.3" text-anchor="start" stroke="#31343c" stroke-width="0.2">the person hands</text><text transform="translate(901.4,509.9) rotate(19)" font-family='"Liberation Serif",serif' font-size="11.2" font-weight="normal" font-style="normal" fill="#31343c" letter-spacing="0.3" text-anchor="start" stroke="#31343c" stroke-width="0.2">becomes involved</text><text transform="translate(899.5,519.6) rotate(19)" font-family='"Liberation Serif",serif' font-size="11.2" font-weight="normal" font-style="normal" fill="#31343c" letter-spacing="0.3" text-anchor="start" stroke="#31343c" stroke-width="0.2">confronts the ma</text><text transform="translate(896.6,529.8) rotate(19)" font-family='"Liberation Serif",serif' font-size="11.2" font-weight="normal" font-style="normal" fill="#31343c" letter-spacing="0.3" text-anchor="start" stroke="#31343c" stroke-width="0.2">a potential bush</text><text transform="translate(893.7,540.5) rotate(19)" font-family='"Liberation Serif",serif' font-size="11.2" font-weight="normal" font-style="normal" fill="#31343c" letter-spacing="0.3" text-anchor="start" stroke="#31343c" stroke-width="0.2">process of introdu</text><text transform="translate(891.8,551.2) rotate(19)" font-family='"Liberation Serif",serif' font-size="11.2" font-weight="normal" font-style="normal" fill="#31343c" letter-spacing="0.3" text-anchor="start" stroke="#31343c" stroke-width="0.2">feedback of opinio</text><text transform="translate(888.7,562.7) rotate(19)" font-family='"Liberation Serif",serif' font-size="11.2" font-weight="normal" font-style="normal" fill="#31343c" letter-spacing="0.3" text-anchor="start" stroke="#31343c" stroke-width="0.2">for years.</text><text transform="translate(895.3,574.9) rotate(19)" font-family='"Liberation Serif",serif' font-size="11.2" font-weight="normal" font-style="normal" fill="#31343c" letter-spacing="0.3" text-anchor="start" stroke="#31343c" stroke-width="0.2">I know of one firm</text><text transform="translate(884.7,584.4) rotate(19)" font-family='"Liberation Serif",serif' font-size="11.2" font-weight="normal" font-style="normal" fill="#31343c" letter-spacing="0.3" text-anchor="start" stroke="#31343c" stroke-width="0.2">that will probably never</text><text transform="translate(880.7,594.6) rotate(19)" font-family='"Liberation Serif",serif' font-size="11.2" font-weight="normal" font-style="normal" fill="#31343c" letter-spacing="0.3" text-anchor="start" stroke="#31343c" stroke-width="0.2">feedback again after</text><text transform="translate(878.0,607.5) rotate(19)" font-family='"Liberation Serif",serif' font-size="11.2" font-weight="normal" font-style="normal" fill="#31343c" letter-spacing="0.3" text-anchor="start" stroke="#31343c" stroke-width="0.2">sold the top group the</text><text transform="translate(875.3,619.8) rotate(19)" font-family='"Liberation Serif",serif' font-size="11.2" font-weight="normal" font-style="normal" fill="#31343c" letter-spacing="0.3" text-anchor="start" stroke="#31343c" stroke-width="0.2">method was to inter</text><text transform="translate(872.7,632.8) rotate(19)" font-family='"Liberation Serif",serif' font-size="11.2" font-weight="normal" font-style="normal" fill="#31343c" letter-spacing="0.3" text-anchor="start" stroke="#31343c" stroke-width="0.2">manager and co</text><text transform="translate(870.0,646.1) rotate(19)" font-family='"Liberation Serif",serif' font-size="11.2" font-weight="normal" font-style="normal" fill="#31343c" letter-spacing="0.3" text-anchor="start" stroke="#31343c" stroke-width="0.2">reports to dis</text><text transform="translate(868.0,658.8) rotate(19)" font-family='"Liberation Serif",serif' font-size="11.2" font-weight="normal" font-style="normal" fill="#31343c" letter-spacing="0.3" text-anchor="start" stroke="#31343c" stroke-width="0.2">dis</text>
<path id="bandp" d="M438.0,365.6 C528.0,323.1 618.0,408.1 708.0,365.6 C798.0,323.1 888.0,408.1 978.0,365.6 L978.0,446.8 C888.7,490.8 799.3,402.8 710.0,446.8 C620.7,490.8 531.3,402.8 442.0,446.8 Z" fill="#fff"/>
</g>
</svg>
<svg class="abs" style="left:35px;top:360px" width="165" height="94" viewBox="290 177 841 473"><use href="#newsg"/></svg>
<svg class="abs" style="left:36px;top:249px" width="163" height="92" viewBox="290 177 841 473"><g transform="matrix(0.9725,0,0,1.02,-80.3,-127)"><path d="M438.0,365.6 C528.0,323.1 618.0,408.1 708.0,365.6 C798.0,323.1 888.0,408.1 978.0,365.6 L978.0,446.8 C888.7,490.8 799.3,402.8 710.0,446.8 C620.7,490.8 531.3,402.8 442.0,446.8 Z" fill="#4472C4"/></g></svg>

<div class="abs" style="left:991px;top:208px;font-size:27.4px;line-height:32px;color:#E81C24;white-space:nowrap;transform:scaleX(1.035);transform-origin:0 0">移動できる</div>
<svg class="abs" style="left:0;top:0" width="1200" height="675">
 <path d="M992.6,298H1025V336.5H1041.4L1008.8,376L976.3,336.5H992.6Z" fill="#fff" stroke="#E81C24" stroke-width="2.2"/>
 <path d="M1012.5,466.3L1045.4,500.8H1028.5V535.5H996.5V500.8H979.6Z" fill="#fff" stroke="#E81C24" stroke-width="2.2"/>
</svg>
<div class="abs" style="left:268px;top:673px;width:887px;height:2px;background:#fff"></div>
<div class="abs" style="left:1155px;top:645px;width:1px;height:12px;background:#fff"></div>
<div class="abs" style="left:1155px;top:662px;width:1px;height:13px;background:#fff"></div>
</body></html>
